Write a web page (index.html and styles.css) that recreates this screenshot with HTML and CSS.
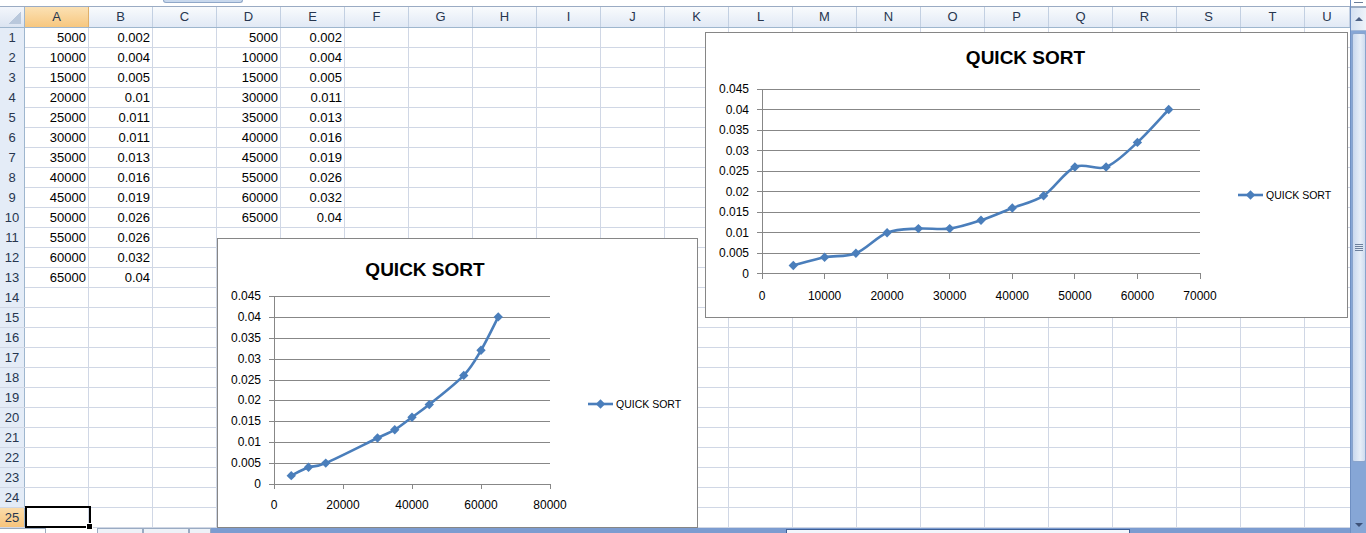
FILE: index.html
```html
<!DOCTYPE html>
<html>
<head>
<meta charset="utf-8">
<link rel="stylesheet" href="styles.css">
</head>
<body>
<div class="app">
  <div class="main">
    <div class="topbar"><div class="fx-tab"></div></div>
    <div class="sheet">
      <div class="colhdr">
        <div class="corner"></div>
        <div class="ch on">A</div><div class="ch">B</div><div class="ch">C</div><div class="ch">D</div><div class="ch">E</div>
        <div class="ch">F</div><div class="ch">G</div><div class="ch">H</div><div class="ch">I</div><div class="ch">J</div>
        <div class="ch">K</div><div class="ch">L</div><div class="ch">M</div><div class="ch">N</div><div class="ch">O</div>
        <div class="ch">P</div><div class="ch">Q</div><div class="ch">R</div><div class="ch">S</div><div class="ch">T</div>
        <div class="ch">U</div>
      </div>
      <div class="row"><div class="rh">1</div><div class="c">5000</div><div class="c">0.002</div><div class="c"></div><div class="c">5000</div><div class="c">0.002</div></div>
      <div class="row"><div class="rh">2</div><div class="c">10000</div><div class="c">0.004</div><div class="c"></div><div class="c">10000</div><div class="c">0.004</div></div>
      <div class="row"><div class="rh">3</div><div class="c">15000</div><div class="c">0.005</div><div class="c"></div><div class="c">15000</div><div class="c">0.005</div></div>
      <div class="row"><div class="rh">4</div><div class="c">20000</div><div class="c">0.01</div><div class="c"></div><div class="c">30000</div><div class="c">0.011</div></div>
      <div class="row"><div class="rh">5</div><div class="c">25000</div><div class="c">0.011</div><div class="c"></div><div class="c">35000</div><div class="c">0.013</div></div>
      <div class="row"><div class="rh">6</div><div class="c">30000</div><div class="c">0.011</div><div class="c"></div><div class="c">40000</div><div class="c">0.016</div></div>
      <div class="row"><div class="rh">7</div><div class="c">35000</div><div class="c">0.013</div><div class="c"></div><div class="c">45000</div><div class="c">0.019</div></div>
      <div class="row"><div class="rh">8</div><div class="c">40000</div><div class="c">0.016</div><div class="c"></div><div class="c">55000</div><div class="c">0.026</div></div>
      <div class="row"><div class="rh">9</div><div class="c">45000</div><div class="c">0.019</div><div class="c"></div><div class="c">60000</div><div class="c">0.032</div></div>
      <div class="row"><div class="rh">10</div><div class="c">50000</div><div class="c">0.026</div><div class="c"></div><div class="c">65000</div><div class="c">0.04</div></div>
      <div class="row"><div class="rh">11</div><div class="c">55000</div><div class="c">0.026</div></div>
      <div class="row"><div class="rh">12</div><div class="c">60000</div><div class="c">0.032</div></div>
      <div class="row"><div class="rh">13</div><div class="c">65000</div><div class="c">0.04</div></div>
      <div class="row"><div class="rh">14</div></div>
      <div class="row"><div class="rh">15</div></div>
      <div class="row"><div class="rh">16</div></div>
      <div class="row"><div class="rh">17</div></div>
      <div class="row"><div class="rh">18</div></div>
      <div class="row"><div class="rh">19</div></div>
      <div class="row"><div class="rh">20</div></div>
      <div class="row"><div class="rh">21</div></div>
      <div class="row"><div class="rh">22</div></div>
      <div class="row"><div class="rh">23</div></div>
      <div class="row"><div class="rh">24</div></div>
      <div class="row"><div class="rh on">25</div><div class="c sel"></div></div>

      <div class="chart chart1">
        <svg width="481" height="290" viewBox="0 0 481 290">
          <defs>
            <marker id="m1" markerWidth="12" markerHeight="12" refX="6" refY="6" markerUnits="userSpaceOnUse">
              <path d="M6 1.3 L10.7 6 L6 10.7 L1.3 6Z" fill="#4a7ebb"/>
            </marker>
          </defs>
          <rect x="0.5" y="0.5" width="480" height="289" fill="#fff" stroke="#868686"/>
          <text class="ttl" x="208" y="38">QUICK SORT</text>
          <g class="grid">
            <line x1="52" y1="58.5" x2="333" y2="58.5"/>
            <line x1="52" y1="79.5" x2="333" y2="79.5"/>
            <line x1="52" y1="100.5" x2="333" y2="100.5"/>
            <line x1="52" y1="121.5" x2="333" y2="121.5"/>
            <line x1="52" y1="142.5" x2="333" y2="142.5"/>
            <line x1="52" y1="162.5" x2="333" y2="162.5"/>
            <line x1="52" y1="183.5" x2="333" y2="183.5"/>
            <line x1="52" y1="204.5" x2="333" y2="204.5"/>
            <line x1="52" y1="225.5" x2="333" y2="225.5"/>
            <line x1="52" y1="246.5" x2="333" y2="246.5"/>
            <line x1="57.5" y1="58" x2="57.5" y2="251"/>
            <line x1="126.5" y1="246" x2="126.5" y2="251"/>
            <line x1="195.5" y1="246" x2="195.5" y2="251"/>
            <line x1="264.5" y1="246" x2="264.5" y2="251"/>
            <line x1="333.5" y1="246" x2="333.5" y2="251"/>
          </g>
          <g class="yl">
            <text x="44" y="62">0.045</text>
            <text x="44" y="83">0.04</text>
            <text x="44" y="104">0.035</text>
            <text x="44" y="125">0.03</text>
            <text x="44" y="146">0.025</text>
            <text x="44" y="166">0.02</text>
            <text x="44" y="187">0.015</text>
            <text x="44" y="208">0.01</text>
            <text x="44" y="229">0.005</text>
            <text x="44" y="250">0</text>
          </g>
          <g class="xl">
            <text x="57" y="271">0</text>
            <text x="126" y="271">20000</text>
            <text x="195" y="271">40000</text>
            <text x="264" y="271">60000</text>
            <text x="333" y="271">80000</text>
          </g>
          <path class="ser" marker-start="url(#m1)" marker-mid="url(#m1)" marker-end="url(#m1)" d="M74.25 237.64 C77.13 236.25 85.75 231.39 91.5 229.3 C97.25 227.21 97.25 229.98 108.75 225.1 C120.25 220.22 149 205.57 160.5 200 C172 194.43 172 195.17 177.75 191.7 C183.5 188.23 189.25 183.38 195 179.2 C200.75 175.02 203.63 173.57 212.25 166.6 C220.88 159.63 238.13 146.45 246.75 137.4 C255.38 128.35 258.25 122.05 264 112.3 C269.75 102.55 278.38 84.47 281.25 78.9"/>
          <path class="ser" marker-mid="url(#m1)" d="M371 166 L383.5 166 L396 166"/>
          <text class="lg" x="399" y="170">QUICK SORT</text>
        </svg>
      </div>

      <div class="chart chart2">
        <svg width="643" height="286" viewBox="0 0 643 286">
          <defs>
            <marker id="m2" markerWidth="12" markerHeight="12" refX="6" refY="6" markerUnits="userSpaceOnUse">
              <path d="M6 1.3 L10.7 6 L6 10.7 L1.3 6Z" fill="#4a7ebb"/>
            </marker>
          </defs>
          <rect x="0.5" y="0.5" width="642" height="285" fill="#fff" stroke="#868686"/>
          <g transform="translate(0,-1)">
            <text class="ttl" x="320.5" y="33">QUICK SORT</text>
            <g class="grid">
              <line x1="52" y1="58.5" x2="495" y2="58.5"/>
              <line x1="52" y1="78.5" x2="495" y2="78.5"/>
              <line x1="52" y1="99.5" x2="495" y2="99.5"/>
              <line x1="52" y1="119.5" x2="495" y2="119.5"/>
              <line x1="52" y1="140.5" x2="495" y2="140.5"/>
              <line x1="52" y1="160.5" x2="495" y2="160.5"/>
              <line x1="52" y1="181.5" x2="495" y2="181.5"/>
              <line x1="52" y1="201.5" x2="495" y2="201.5"/>
              <line x1="52" y1="222.5" x2="495" y2="222.5"/>
              <line x1="52" y1="242.5" x2="495" y2="242.5"/>
              <line x1="57.5" y1="58" x2="57.5" y2="248"/>
              <line x1="119.5" y1="242" x2="119.5" y2="248"/>
              <line x1="182.5" y1="242" x2="182.5" y2="248"/>
              <line x1="244.5" y1="242" x2="244.5" y2="248"/>
              <line x1="307.5" y1="242" x2="307.5" y2="248"/>
              <line x1="369.5" y1="242" x2="369.5" y2="248"/>
              <line x1="432.5" y1="242" x2="432.5" y2="248"/>
              <line x1="495.5" y1="242" x2="495.5" y2="248"/>
            </g>
            <g class="yl">
              <text x="44" y="62">0.045</text>
              <text x="44" y="82.5">0.04</text>
              <text x="44" y="103">0.035</text>
              <text x="44" y="123.6">0.03</text>
              <text x="44" y="144.1">0.025</text>
              <text x="44" y="164.6">0.02</text>
              <text x="44" y="185.1">0.015</text>
              <text x="44" y="205.7">0.01</text>
              <text x="44" y="226.2">0.005</text>
              <text x="44" y="246.7">0</text>
            </g>
            <g class="xl">
              <text x="57" y="269">0</text>
              <text x="119.6" y="269">10000</text>
              <text x="182.1" y="269">20000</text>
              <text x="244.7" y="269">30000</text>
              <text x="307.3" y="269">40000</text>
              <text x="369.9" y="269">50000</text>
              <text x="432.4" y="269">60000</text>
              <text x="495" y="269">70000</text>
            </g>
            <path class="ser" marker-start="url(#m2)" marker-mid="url(#m2)" marker-end="url(#m2)" d="M88.3 234.5 C93.52 233.13 109.17 228.35 119.6 226.3 C130.03 224.25 140.47 226.3 150.9 222.2 C161.33 218.1 171.67 205.8 182.1 201.7 C192.53 197.6 202.97 198.28 213.4 197.6 C223.83 196.92 234.27 198.98 244.7 197.6 C255.13 196.22 265.57 192.73 276 189.3 C286.43 185.87 296.87 181.1 307.3 177 C317.73 172.9 328.17 171.53 338.6 164.7 C349.03 157.87 359.47 140.78 369.9 136 C380.33 131.22 390.67 140.1 401.1 136 C411.53 131.9 421.97 120.98 432.4 111.4 C442.83 101.82 458.48 83.98 463.7 78.5"/>
            <path class="ser" marker-mid="url(#m2)" d="M533 164 L545.5 164 L558 164"/>
            <text class="lg" x="561" y="168">QUICK SORT</text>
          </g>
        </svg>
      </div>
    </div>
    <div class="hbar">
      <div class="hb-nav"></div>
      <div class="hb-gap"></div>
      <div class="hb-tab"></div>
      <div class="hb-tab"></div>
      <div class="hb-tab short"></div>
      <div class="hb-track">
        <div class="hb-thumb"></div>
      </div>
    </div>
  </div>
  <div class="vscroll">
    <div class="vs-split"></div>
    <div class="vs-up"><span class="tri-up"></span></div>
    <div class="vs-thumb"><div class="grip"></div></div>
    <div class="vs-track"></div>
    <div class="vs-down"><span class="tri-down"></span></div>
  </div>
</div>
</body>
</html>
```

FILE: styles.css
```css
html, body {
  margin: 0;
  padding: 0;
  background: #fff;
  overflow: hidden;
}
body {
  font-family: "Liberation Sans", Arial, sans-serif;
  font-size: 13px;
  color: #000;
}
.app {
  display: flex;
  width: 1366px;
  height: 533px;
}
.main {
  width: 1350px;
  display: flex;
  flex-direction: column;
}
.topbar {
  height: 6px;
  border-bottom: 1px solid #9aabc3;
  background: #fff;
}
.fx-tab {
  margin-left: 163px;
  width: 78px;
  height: 2px;
  background: #c8d8ed;
  border: 1px solid #8fa7c8;
  border-top: none;
  border-radius: 0 0 5px 5px;
}
.sheet {
  position: relative;
  flex: none;
  height: 521px;
}
.colhdr {
  display: grid;
  grid-template-columns: 25px repeat(20, 64px) 45px;
  height: 21px;
  box-sizing: border-box;
  border-bottom: 1px solid #9eb6ce;
}
.corner {
  background:
    linear-gradient(to bottom right, transparent 50%, #b9c8dc 50%) right 3px bottom 3px / 12px 12px no-repeat,
    linear-gradient(#f3f6fb, #dbe4f1);
  border-right: 1px solid #9eb6ce;
}
.ch {
  background: linear-gradient(#f9fbfd, #e1e9f5);
  border-right: 1px solid #c3d0e2;
  text-align: center;
  line-height: 20px;
  color: #27364f;
}
.ch.on {
  background: linear-gradient(#fbe1b4, #f7c77f);
  border-right-color: #e0b06a;
}
.row {
  display: grid;
  grid-template-columns: 25px repeat(5, 64px);
  height: 20px;
  box-sizing: border-box;
  border-bottom: 1px solid #d0d7e5;
  background-image: repeating-linear-gradient(to right, transparent 0 63px, #d0d7e5 63px 64px);
  background-position: 25px 0;
}
.rh {
  background: #e4ecf7;
  border-right: 1px solid #9eb6ce;
  text-align: center;
  line-height: 19px;
  color: #27364f;
}
.rh.on {
  background: linear-gradient(#fbdcaa, #f7c47c);
}
.c {
  text-align: right;
  padding-right: 3px;
  line-height: 20px;
  white-space: nowrap;
}
.c.sel {
  position: relative;
}
.c.sel::after {
  content: "";
  position: absolute;
  left: 0;
  top: -2px;
  right: -2px;
  bottom: -1px;
  border: 2px solid #000;
}
.c.sel::before {
  content: "";
  position: absolute;
  right: -4px;
  bottom: -3px;
  width: 5px;
  height: 5px;
  background: #000;
  border: 1px solid #fff;
  z-index: 2;
}
.chart {
  position: absolute;
  background: #fff;
}
.chart svg {
  display: block;
}
.chart1 {
  left: 217px;
  top: 231px;
}
.chart2 {
  left: 705px;
  top: 25px;
}
.ttl {
  font-family: "Liberation Sans", Arial, sans-serif;
  font-weight: bold;
  font-size: 19px;
  text-anchor: middle;
  fill: #000;
}
.grid line {
  stroke: #878787;
  stroke-width: 1;
  shape-rendering: crispEdges;
}
.yl text {
  font-family: "Liberation Sans", Arial, sans-serif;
  font-size: 12px;
  text-anchor: end;
  fill: #000;
}
.xl text {
  font-family: "Liberation Sans", Arial, sans-serif;
  font-size: 12px;
  text-anchor: middle;
  fill: #000;
}
.lg {
  font-family: "Liberation Sans", Arial, sans-serif;
  font-size: 10.5px;
  fill: #000;
}
.ser {
  fill: none;
  stroke: #4a7ebb;
  stroke-width: 2.6;
  stroke-linejoin: round;
}
.hbar {
  height: 5px;
  display: flex;
  background: #dce6f4;
}
.hb-nav {
  width: 45px;
  background: #fff;
  border-top: 1px solid #9aa9bd;
  border-right: 1px solid #9aa9bd;
}
.hb-gap {
  width: 51px;
  background: #fff;
}
.hb-tab {
  width: 46px;
  background: #eef2f8;
  border: 1px solid #9aabc3;
  border-bottom: none;
  box-sizing: border-box;
}
.hb-tab.short {
  width: 22px;
}
.hb-track {
  flex: 1;
  background: #7c9cd0;
  padding-left: 575px;
  padding-right: 220px;
  display: flex;
}
.hb-thumb {
  flex: 1;
  margin-top: 1px;
  background: #f2f6fc;
  border-top: 1px solid #3d5e96;
  border-left: 1px solid #3d5e96;
  border-right: 1px solid #3d5e96;
}
.vscroll {
  width: 16px;
  height: 533px;
  display: flex;
  flex-direction: column;
  background: #86a6d6;
  box-sizing: border-box;
  border-left: 1px solid #6f8fc2;
}
.vs-split {
  height: 8px;
  background: #fff;
  border-bottom: 2px solid #9aabc3;
  box-sizing: border-box;
  position: relative;
}
.vs-split::after {
  content: "";
  display: block;
  margin: 2px 3px 0;
  height: 1px;
  background: #6a7d99;
}
.vs-up {
  height: 22px;
  background: linear-gradient(to right, #d5e1f1, #eef3fa);
  border-bottom: 1px solid #a4b9d8;
  display: flex;
  align-items: center;
  justify-content: center;
}
.tri-up {
  width: 0;
  height: 0;
  border-left: 4px solid transparent;
  border-right: 4px solid transparent;
  border-bottom: 4px solid #4d6185;
}
.vs-thumb {
  height: 427px;
  margin: 2px 0 0 1px;
  background: linear-gradient(to right, #c9d8ee, #e7eef8 60%, #cfdcf0);
  border: 1px solid #8aa4cc;
  border-radius: 2px;
  display: flex;
  align-items: center;
  justify-content: center;
}
.grip {
  width: 8px;
  height: 7px;
  background: repeating-linear-gradient(#6c7f9c 0 1px, transparent 1px 2px);
  margin-top: 0;
}
.vs-track {
  flex: 1;
}
.vs-down {
  height: 16px;
  display: flex;
  align-items: center;
  justify-content: center;
}
.tri-down {
  width: 0;
  height: 0;
  border-left: 4px solid transparent;
  border-right: 4px solid transparent;
  border-top: 4px solid #3e5279;
}
```
